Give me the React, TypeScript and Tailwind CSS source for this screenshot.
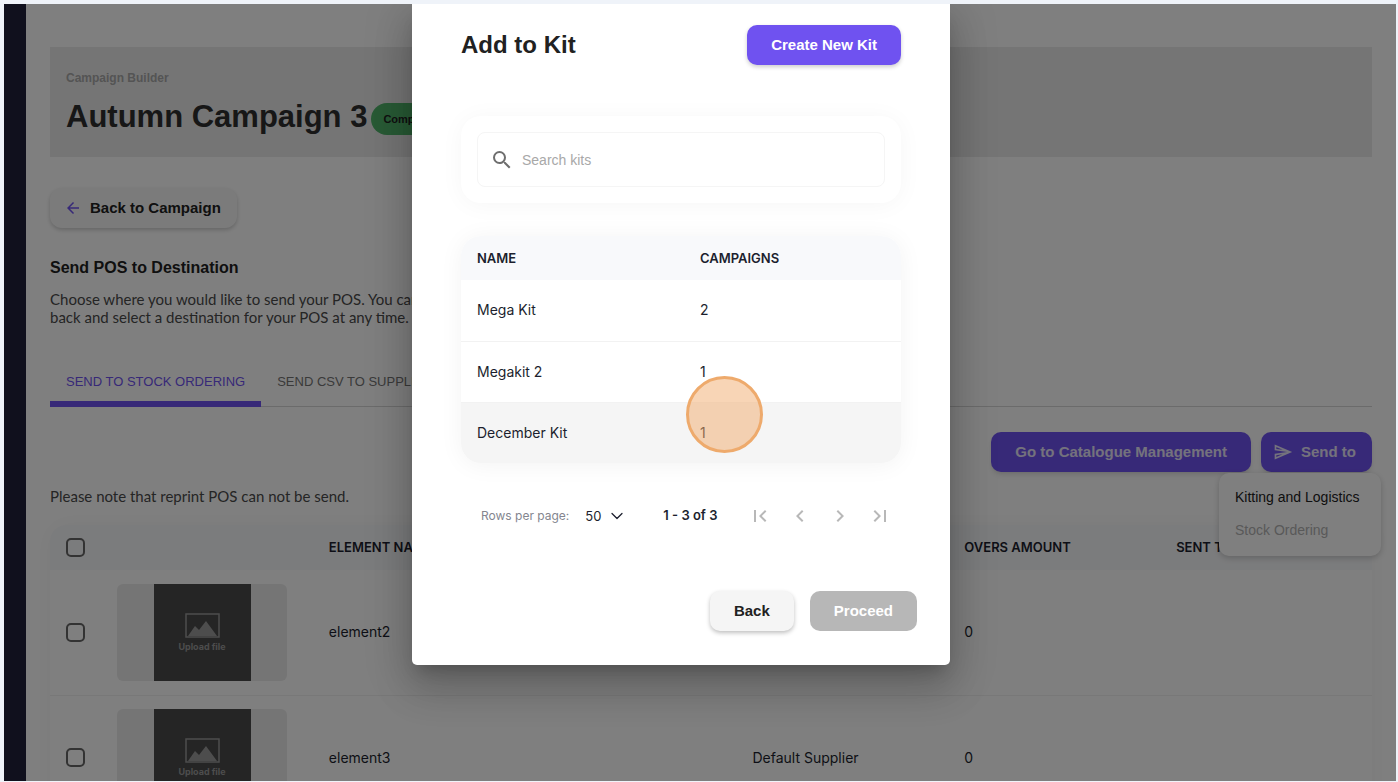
import { useState } from 'react';
import { MdArrowBack, MdSearch, MdOutlineSend, MdFirstPage, MdChevronLeft, MdChevronRight, MdLastPage } from 'react-icons/md';
import { ChevronDown } from 'lucide-react';

const elements = [
  { name: 'element2', supplier: '', overs: 0 },
  { name: 'element3', supplier: 'Default Supplier', overs: 0 },
];

const kits = [
  { name: 'Mega Kit', campaigns: 2 },
  { name: 'Megakit 2', campaigns: 1 },
  { name: 'December Kit', campaigns: 1 },
];

export default function App() {
  return (
    <div className="h-screen overflow-hidden bg-[#eff3f9] pt-1 pr-0.5 pb-px pl-1 font-['Liberation_Sans',Arial,sans-serif] text-[#212121]">
      <div className="relative flex h-full overflow-hidden bg-white">
        <aside className="w-[22px] shrink-0 bg-[#20203a]" />
        <CampaignPage />
        <div className="absolute inset-0 z-20 flex items-start justify-center bg-black/50 pr-[38px]">
          <KitDialog />
        </div>
      </div>
    </div>
  );
}

const CampaignPage = () => (
  <main className="min-w-0 flex-1 px-6 pt-[43px]">
    <header className="h-[110px] bg-[#ebebeb] px-4 pt-[22px]">
      <div className="text-xs leading-[18px] font-bold text-[#a9a9a9]">Campaign Builder</div>
      <div className="mt-2.5 flex items-center gap-1">
        <h1 className="text-[31px] leading-10 font-bold whitespace-nowrap text-[#2e2e2e]">Autumn Campaign 3</h1>
        <span className="mt-1 rounded-full bg-[#50b56b] px-3 text-[11px] leading-8 font-bold">Completed</span>
      </div>
    </header>

    <button className="mt-[31px] flex h-10 items-center gap-2 rounded-xl bg-[#f7f7f7] pr-4 pl-3.5 text-[15px] font-bold shadow-[0_2px_4px_rgba(0,0,0,0.2)]">
      <MdArrowBack className="size-[18px] text-[#6f52f0]" />
      Back to Campaign
    </button>

    <h2 className="mt-[30px] text-base leading-5 font-bold">Send POS to Destination</h2>
    <p className="mt-3 w-[390px] font-['Lato',sans-serif] text-[15px] leading-[18px] whitespace-nowrap text-[#4a4a4a]">
      Choose where you would like to send your POS. You can go
      <br />
      back and select a destination for your POS at any time.
    </p>

    <div className="mt-[29px] flex h-[52px] border-b border-[#d6d6d6] text-[13px]" role="tablist">
      <button role="tab" aria-selected="true" className="-mb-px border-b-6 border-[#6f52f0] px-4 pt-2 whitespace-nowrap text-[#6f52f0]">
        SEND TO STOCK ORDERING
      </button>
      <button role="tab" className="px-4 pt-0.5 whitespace-nowrap text-[#757575]">SEND CSV TO SUPPLIERS</button>
    </div>

    <div className="mt-[25px] flex justify-end gap-2.5">
      <button className="h-10 rounded-[10px] bg-[#6f52f0] px-6 text-[15px] font-bold text-[#e8e4fa] shadow-md">Go to Catalogue Management</button>
      <div className="relative">
        <button className="flex h-10 items-center gap-2 rounded-[10px] bg-[#6f52f0] pr-4 pl-3 text-[15px] font-bold text-[#e8e4fa] shadow-md">
          <MdOutlineSend className="size-5" />
          Send to
        </button>
        <ul className="absolute top-[41px] -right-[9px] z-10 min-w-[162px] rounded-[10px] bg-white px-4 pt-2 pb-[9px] text-sm leading-[33px] whitespace-nowrap shadow-[0_2px_6px_rgba(0,0,0,0.2)]">
          <li><button>Kitting and Logistics</button></li>
          <li><button disabled className="text-[#b2b2b2]">Stock Ordering</button></li>
        </ul>
      </div>
    </div>

    <p className="mt-3.5 font-['Lato',sans-serif] text-[15px] leading-5 text-[#4a4a4a]">Please note that reprint POS can not be send.</p>

    <div className="mt-[19px] overflow-hidden rounded-t-2xl shadow-[0_0_24px_rgba(0,0,0,0.04)]">
      <table className="w-full table-fixed text-left font-['Inter',sans-serif] text-sm text-[#1c1f2e]">
        <thead className="h-[45px] bg-[#f7f8fa] text-[13px]">
          <tr>
            <th className="w-[51px] pl-4"><Checkbox label="Select all elements" /></th>
            <th />
            <th className="px-4 font-semibold whitespace-nowrap">ELEMENT NAME</th>
            <th />
            <th className="px-4 font-semibold">SUPPLIER</th>
            <th className="px-4 font-semibold">OVERS AMOUNT</th>
            <th className="px-4 font-semibold">SENT TO</th>
          </tr>
        </thead>
        <tbody>
          {elements.map((el) => (
            <tr key={el.name} className="h-[125px] border-b border-[#f0f0f0]">
              <td className="pl-4"><Checkbox label={`Select ${el.name}`} /></td>
              <td className="px-4"><Thumbnail /></td>
              <td className="px-4">{el.name}</td>
              <td />
              <td className="px-4">{el.supplier}</td>
              <td className="px-4">{el.overs}</td>
              <td />
            </tr>
          ))}
        </tbody>
      </table>
    </div>
  </main>
);

const Checkbox = ({ label }: { label: string }) => (
  <input type="checkbox" aria-label={label} className="block size-[19px] appearance-none rounded-[5px] border-2 border-[#666] checked:bg-[#6f52f0]" />
);

const Thumbnail = () => (
  <div className="flex h-[97px] w-[170px] justify-center rounded-md bg-[#ebebeb]">
    <div className="flex w-[97px] flex-col items-center bg-[#4b4b4b] pt-[29px] text-[#9a9a9a]">
      <svg className="h-[25px] w-[35px]" viewBox="0 0 35 25" fill="none">
        <rect x="1" y="1" width="33" height="23" stroke="currentColor" strokeWidth="1.5" />
        <path d="M3 23 10 13 14 17 21 8 32 23Z" fill="currentColor" />
      </svg>
      <span className="mt-[3px] text-[9px] leading-3 font-bold">Upload file</span>
    </div>
  </div>
);

const KitDialog = () => {
  const [search, setSearch] = useState('');
  const rows = kits.filter((kit) => kit.name.toLowerCase().includes(search.toLowerCase()));

  return (
    <section
      role="dialog"
      aria-labelledby="kit-title"
      className="relative w-full max-w-[538px] rounded-b-[5px] bg-white pb-[34px] shadow-[0_11px_15px_-7px_rgba(0,0,0,0.2),0_24px_38px_3px_rgba(0,0,0,0.14),0_9px_46px_8px_rgba(0,0,0,0.12)]"
    >
      <div className="px-[49px] pt-[21px]">
        <div className="flex items-center justify-between">
          <h2 id="kit-title" className="text-2xl font-bold">Add to Kit</h2>
          <button className="h-10 rounded-[10px] bg-[#6f52f0] px-6 text-[15px] font-bold text-white shadow-[0_2px_4px_rgba(0,0,0,0.2)]">Create New Kit</button>
        </div>

        <div className="mt-[51px] rounded-[20px] p-4 shadow-[0_2px_24px_rgba(0,0,0,0.04)]">
          <label className="flex h-[55px] items-center gap-2 rounded-lg border border-[#f5f5f5] px-3">
            <MdSearch className="size-6 shrink-0 text-[#6e6e6e]" />
            <input
              aria-label="Search kits"
              placeholder="Search kits"
              value={search}
              onChange={(e) => setSearch(e.target.value)}
              className="min-w-0 flex-1 text-sm outline-none placeholder:text-[#a8a8a8]"
            />
          </label>
        </div>

        <div className="mt-[33px] overflow-hidden rounded-[20px] shadow-[0_2px_24px_rgba(0,0,0,0.05)]">
          <table className="w-full table-fixed text-left font-['Inter',sans-serif] text-sm text-[#1c1f2e]">
            <thead className="h-11 bg-[#f8f9fb] text-[13px]">
              <tr>
                <th className="w-[223px] px-4 font-semibold">NAME</th>
                <th className="px-4 font-semibold">CAMPAIGNS</th>
              </tr>
            </thead>
            <tbody>
              {rows.map((kit) => (
                <tr key={kit.name} className="h-[61px] border-b border-[#f2f2f2] last:border-0 last:bg-[#f5f5f5]">
                  <td className="px-4">{kit.name}</td>
                  <td className="px-4">{kit.campaigns}</td>
                </tr>
              ))}
            </tbody>
          </table>
        </div>

        <div className="mt-[41px] flex h-6 items-center pr-[9px] pl-5 font-['Inter',sans-serif] text-xs text-[#1c1f2e]">
          <label htmlFor="rows" className="whitespace-nowrap text-[#84868f]">Rows per page:</label>
          <div className="relative ml-4">
            <select id="rows" defaultValue="50" className="block w-[42px] appearance-none text-[13px] leading-5 outline-none">
              <option>25</option>
              <option>50</option>
            </select>
            <ChevronDown className="pointer-events-none absolute top-0 right-0 size-5" strokeWidth={1.5} />
          </div>
          <span className="ml-9 text-[13px] font-semibold whitespace-nowrap">1 - 3 of 3</span>
          <div className="ml-auto flex gap-4 text-[#b8b8b8]">
            <button aria-label="First page"><MdFirstPage className="size-6" /></button>
            <button aria-label="Previous page"><MdChevronLeft className="size-6" /></button>
            <button aria-label="Next page"><MdChevronRight className="size-6" /></button>
            <button aria-label="Last page"><MdLastPage className="size-6" /></button>
          </div>
        </div>
      </div>

      <div className="mt-[63px] flex justify-end gap-4 pr-[33px] text-[15px] font-bold">
        <button className="h-10 rounded-[10px] bg-[#f5f5f5] px-6 shadow-[0_2px_4px_rgba(0,0,0,0.25)]">Back</button>
        <button disabled className="h-10 rounded-[10px] bg-[#b7b7b7] px-6 text-white">Proceed</button>
      </div>

      {/* click marker */}
      <div className="pointer-events-none absolute top-[372px] left-[274px] size-[77px] rounded-full border-3 border-[#eeaa6c] bg-[#f1ab6d]/50" />
    </section>
  );
};
